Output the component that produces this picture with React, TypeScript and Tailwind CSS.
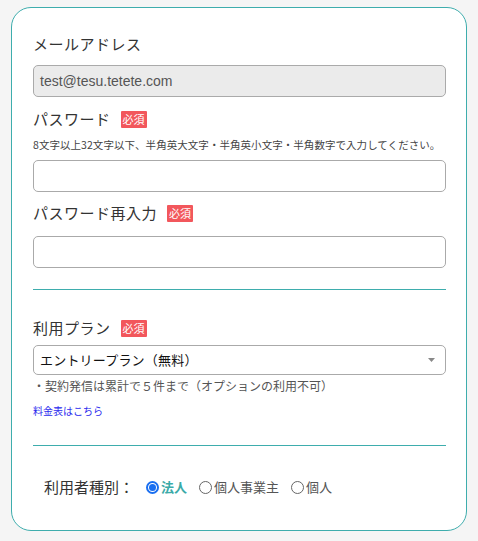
import React from "react";

const JP = { fontFamily: '"Noto Sans CJK JP", "Noto Sans", sans-serif' };

// Small red "required" tag next to a label
const Required = () => (
  <span className="ml-[10px] inline-flex items-center justify-center w-[26px] h-[17px] bg-[#f2575c] text-white text-[11px] leading-none rounded-[1px] tracking-normal">
    必須
  </span>
);

const Radio = ({ checked, label }: { checked?: boolean; label: string }) => (
  <label className="flex items-center cursor-pointer">
    {checked ? (
      <span className="w-[13px] h-[13px] rounded-full border-2 border-[#1a6ff0] flex items-center justify-center">
        <span className="w-[7px] h-[7px] rounded-full bg-[#1a6ff0]" />
      </span>
    ) : (
      <span className="w-[13px] h-[13px] rounded-full border border-[#666]" />
    )}
    <span
      className={`ml-[2px] text-[13px] leading-[20px] ${
        checked ? "font-bold text-[#3aaaa8]" : "text-[#555]"
      }`}
    >
      {label}
    </span>
  </label>
);

export default function App() {
  return (
    <div className="min-h-screen bg-[#f5f5f5] pt-[7px] pl-[11px]" style={JP}>
      <div className="w-[456px] bg-white border border-[#3eadad] rounded-[20px] pl-[21px] pr-[20px] pt-[26px] pb-[33px]">
        {/* Email */}
        <div className="text-[15px] leading-[20px] text-[#333] tracking-[0.5px]">メールアドレス</div>
        <div
          className="mt-[11px] h-[32px] bg-[#ebebeb] border border-[#aaa] rounded-[5px] px-[6px] flex items-center text-[14px] text-[#555]"
          style={{ fontFamily: '"Liberation Sans", Arial, sans-serif' }}
        >
          test@tesu.tetete.com
        </div>

        {/* Password */}
        <div className="mt-[12px] flex items-center text-[15px] leading-[20px] text-[#333] tracking-[0.5px]">
          パスワード
          <Required />
        </div>
        <div className="mt-[8px] text-[10.5px] leading-[16px] text-[#444] tracking-[0.05px]">
          8文字以上32文字以下、半角英大文字・半角英小文字・半角数字で入力してください。
        </div>
        <input
          type="password"
          className="mt-[7px] block w-full h-[32px] bg-white border border-[#aaa] rounded-[5px] px-[6px] outline-none"
        />

        {/* Password confirm */}
        <div className="mt-[11px] flex items-center text-[15px] leading-[20px] text-[#333] tracking-[0.5px]">
          パスワード再入力
          <Required />
        </div>
        <input
          type="password"
          className="mt-[13px] block w-full h-[32px] bg-white border border-[#aaa] rounded-[5px] px-[6px] outline-none"
        />

        <div className="mt-[21px] h-px bg-[#3eadad]" />

        {/* Plan */}
        <div className="mt-[28px] flex items-center text-[15px] leading-[20px] text-[#333] tracking-[0.5px]">
          利用プラン
          <Required />
        </div>
        <div className="mt-[7px] h-[30px] border border-[#aaa] rounded-[5px] pl-[6px] pr-[10px] flex items-center justify-between">
          <span className="text-[13px] text-[#111] tracking-[0.2px]">エントリープラン（無料）</span>
          <svg width="7" height="4" viewBox="0 0 7 4">
            <path d="M0 0 H7 L3.5 4 Z" fill="#888" />
          </svg>
        </div>
        <div className="mt-[3px] text-[12px] leading-[16px] text-[#555]">
          ・契約発信は累計で５件まで（オプションの利用不可）
        </div>
        <a href="#" className="mt-[10px] block text-[10px] leading-[14px] text-[#2a2aee]">
          料金表はこちら
        </a>

        <div className="mt-[27px] h-px bg-[#3eadad]" />

        {/* User type */}
        <div className="mt-[31px] pl-[11px] flex items-center">
          <span className="text-[15px] leading-[20px] text-[#333] mr-[12px]">利用者種別：</span>
          <div className="flex items-center gap-[12px]">
            <Radio checked label="法人" />
            <Radio label="個人事業主" />
            <Radio label="個人" />
          </div>
        </div>
      </div>
    </div>
  );
}
